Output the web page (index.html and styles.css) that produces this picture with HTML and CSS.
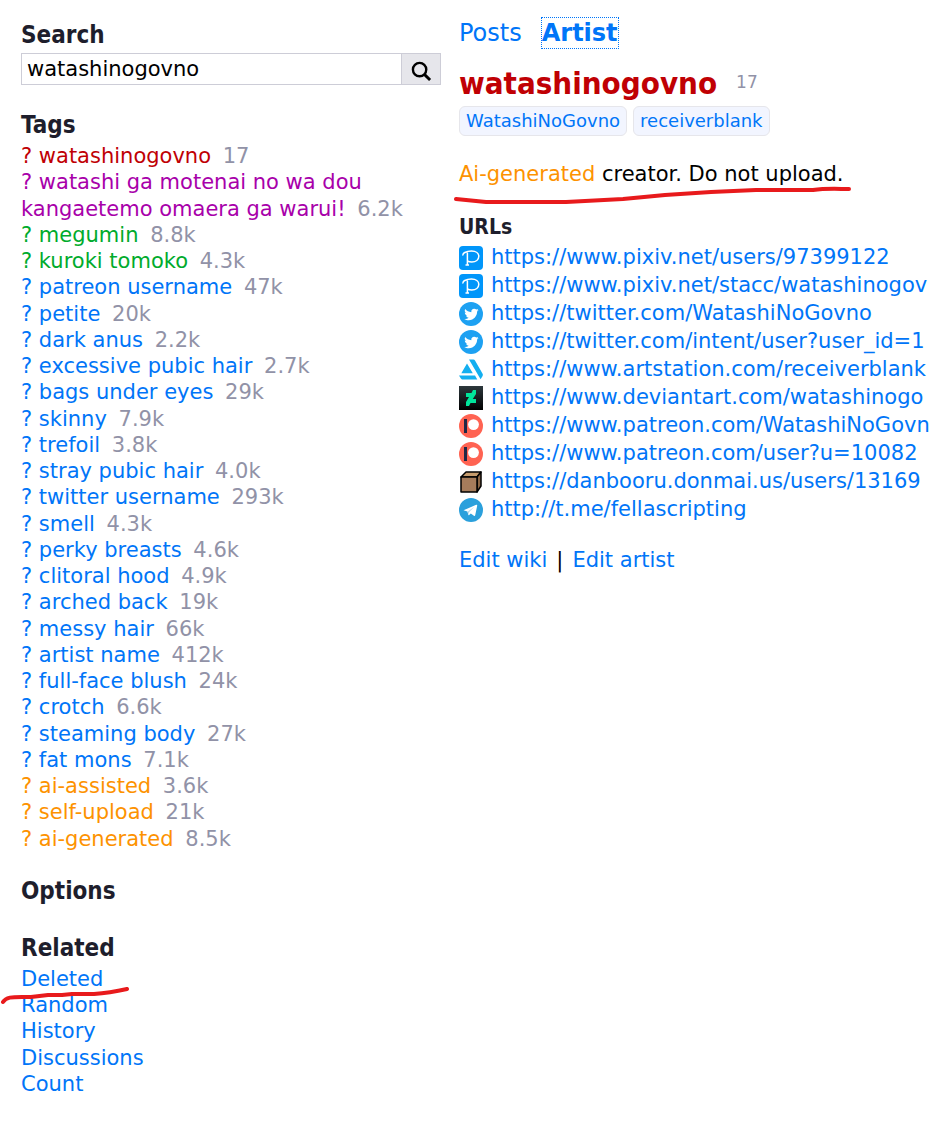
FILE: index.html
```html
<!DOCTYPE html>
<html lang="en">
<head>
    <meta charset="UTF-8">
    <meta name="viewport" content="width=device-width, initial-scale=1.0">
    <title>watashinogovno</title>
    <link rel="stylesheet" href="styles.css">
</head>
<body>
    <!-- shared icons -->
    <svg class="sprite" aria-hidden="true">
        <symbol id="pixiv" viewBox="0 0 24 24">
            <rect width="24" height="24" rx="4" fill="#0096fa"/>
            <path d="M4.200 9.500C3 7.500 7 5 12.500 5C17 5 19.800 7.200 19.800 10.300C19.800 13.700 16.800 16 12.800 16C11 16 9.600 15.600 8.400 15M8.400 6.500V18.500M6.500 19H10" fill="none" stroke="#fff" stroke-width="1.500"/>
        </symbol>
        <symbol id="twitter" viewBox="0 0 24 24">
            <circle cx="12" cy="12" r="12" fill="#1da1f2"/>
            <path d="M9.700 18.200c5.400 0 8.400-4.500 8.400-8.400v-.4c.6-.4 1.100-.9 1.500-1.500-.5.200-1.100.4-1.700.5.600-.4 1.100-.9 1.300-1.600-.6.300-1.200.6-1.900.7a3 3 0 0 0-5 2.700c-2.500-.1-4.600-1.300-6.100-3.100a3 3 0 0 0 .9 3.900c-.5 0-.9-.1-1.300-.4 0 1.400 1 2.700 2.400 3-.4.100-.9.100-1.300 0 .4 1.200 1.500 2 2.800 2.100a6 6 0 0 1-4.400 1.200c1.300.8 2.800 1.300 4.400 1.300" fill="#fff"/>
        </symbol>
        <symbol id="patreon" viewBox="0 0 24 24">
            <circle cx="12" cy="12" r="12" fill="#ff6352"/>
            <circle cx="14.500" cy="10.600" r="5.400" fill="#fff"/>
            <rect x="5" y="5" width="3" height="14" fill="#1f2846"/>
        </symbol>
    </svg>

    <div class="page">
        <aside class="sidebar">
            <section>
                <h2><label for="tags">Search</label></h2>
                <form class="search">
                    <input type="text" id="tags" value="watashinogovno">
                    <button type="button" aria-label="Search">
                        <svg width="21" height="21" viewBox="0 0 22 22"><circle cx="9" cy="9" r="7" fill="none" stroke="#000" stroke-width="2.500"/><path d="M14 14l6 6" stroke="#000" stroke-width="3"/></svg>
                    </button>
                </form>
            </section>

            <section>
                <h2>Tags</h2>
                <ul class="tags">
                    <li class="artist"><a href="#">?</a> <a href="#">watashinogovno</a> <span class="count">17</span></li>
                    <li class="copyright"><a href="#">?</a> <a href="#">watashi ga motenai no wa dou kangaetemo omaera ga warui!</a> <span class="count">6.2k</span></li>
                    <li class="character"><a href="#">?</a> <a href="#">megumin</a> <span class="count">8.8k</span></li>
                    <li class="character"><a href="#">?</a> <a href="#">kuroki tomoko</a> <span class="count">4.3k</span></li>
                    <li><a href="#">?</a> <a href="#">patreon username</a> <span class="count">47k</span></li>
                    <li><a href="#">?</a> <a href="#">petite</a> <span class="count">20k</span></li>
                    <li><a href="#">?</a> <a href="#">dark anus</a> <span class="count">2.2k</span></li>
                    <li><a href="#">?</a> <a href="#">excessive pubic hair</a> <span class="count">2.7k</span></li>
                    <li><a href="#">?</a> <a href="#">bags under eyes</a> <span class="count">29k</span></li>
                    <li><a href="#">?</a> <a href="#">skinny</a> <span class="count">7.9k</span></li>
                    <li><a href="#">?</a> <a href="#">trefoil</a> <span class="count">3.8k</span></li>
                    <li><a href="#">?</a> <a href="#">stray pubic hair</a> <span class="count">4.0k</span></li>
                    <li><a href="#">?</a> <a href="#">twitter username</a> <span class="count">293k</span></li>
                    <li><a href="#">?</a> <a href="#">smell</a> <span class="count">4.3k</span></li>
                    <li><a href="#">?</a> <a href="#">perky breasts</a> <span class="count">4.6k</span></li>
                    <li><a href="#">?</a> <a href="#">clitoral hood</a> <span class="count">4.9k</span></li>
                    <li><a href="#">?</a> <a href="#">arched back</a> <span class="count">19k</span></li>
                    <li><a href="#">?</a> <a href="#">messy hair</a> <span class="count">66k</span></li>
                    <li><a href="#">?</a> <a href="#">artist name</a> <span class="count">412k</span></li>
                    <li><a href="#">?</a> <a href="#">full-face blush</a> <span class="count">24k</span></li>
                    <li><a href="#">?</a> <a href="#">crotch</a> <span class="count">6.6k</span></li>
                    <li><a href="#">?</a> <a href="#">steaming body</a> <span class="count">27k</span></li>
                    <li><a href="#">?</a> <a href="#">fat mons</a> <span class="count">7.1k</span></li>
                    <li class="meta"><a href="#">?</a> <a href="#">ai-assisted</a> <span class="count">3.6k</span></li>
                    <li class="meta"><a href="#">?</a> <a href="#">self-upload</a> <span class="count">21k</span></li>
                    <li class="meta"><a href="#">?</a> <a href="#">ai-generated</a> <span class="count">8.5k</span></li>
                </ul>
            </section>

            <section>
                <h2>Options</h2>
            </section>

            <section>
                <h2>Related</h2>
                <ul>
                    <li class="marked">
                        <a href="#">Deleted</a>
                        <svg class="mark mark-deleted" width="130" height="18" viewBox="0 0 130 18"><path d="M3 15C6 10 12 10 22 10H31L48 8H62L72 7H94C108 6 118 4 127 2"/></svg>
                    </li>
                    <li><a href="#">Random</a></li>
                    <li><a href="#">History</a></li>
                    <li><a href="#">Discussions</a></li>
                    <li><a href="#">Count</a></li>
                </ul>
            </section>
        </aside>

        <main class="content">
            <nav class="tabs">
                <a href="#">Posts</a>
                <a href="#" class="active">Artist</a>
            </nav>

            <div class="title">
                <h1><a href="#">watashinogovno</a></h1>
                <span class="count">17</span>
            </div>
            <div class="names">
                <a href="#">WatashiNoGovno</a>
                <a href="#">receiverblank</a>
            </div>

            <p class="wiki marked">
                <a href="#" class="meta-link">Ai-generated</a> creator. Do not upload.
                <svg class="mark mark-wiki" width="400" height="20" viewBox="0 0 400 20"><path d="M3 14L33 17H113L170 14L212 10L258 7L303 5H360C374 3 386 4 396 4"/></svg>
            </p>

            <h3>URLs</h3>
            <ul class="urls">
                <li><svg><use href="#pixiv"/></svg><a href="#">https://www.pixiv.net/users/97399122</a></li>
                <li><svg><use href="#pixiv"/></svg><a href="#">https://www.pixiv.net/stacc/watashinogov</a></li>
                <li><svg><use href="#twitter"/></svg><a href="#">https://twitter.com/WatashiNoGovno</a></li>
                <li><svg><use href="#twitter"/></svg><a href="#">https://twitter.com/intent/user?user_id=1</a></li>
                <li>
                    <svg viewBox="0 0 24 24"><path d="M0 17.500h16l2.300 4H4.100c-1.300 0-1.800-.5-2.400-1.300zM8 5.500l5.800 9.700H2.300zM10 1.500h4.300c.8 0 1.300.4 1.700 1l7.600 13.200c.4.700.4 1.500 0 2.200l-2 3.300z" fill="#13aff0"/></svg>
                    <a href="#">https://www.artstation.com/receiverblank</a>
                </li>
                <li>
                    <svg viewBox="0 0 24 24">
                        <defs><linearGradient id="dark" x2="0" y2="1"><stop stop-color="#2d383d"/><stop offset="1" stop-color="#000"/></linearGradient></defs>
                        <path d="M0 0h24v24H0z" fill="url(#dark)"/>
                        <path d="M17 4v4l-3.200 5H17v4h-5.500L10 20H7v-4l3-5H7V7h5.500L14 4z" fill="#00e59b"/>
                    </svg>
                    <a href="#">https://www.deviantart.com/watashinogo</a>
                </li>
                <li><svg><use href="#patreon"/></svg><a href="#">https://www.patreon.com/WatashiNoGovn</a></li>
                <li><svg><use href="#patreon"/></svg><a href="#">https://www.patreon.com/user?u=10082</a></li>
                <li>
                    <svg viewBox="0 0 24 24" stroke="#000" stroke-width="1.500" stroke-linejoin="round">
                        <path d="M2 7l5-5h15l-4 5z" fill="#c69c6d"/>
                        <path d="M18 7l4-5v14l-4 6z" fill="#8c6746"/>
                        <path d="M2 7h16v15H2z" fill="#a67c5b"/>
                    </svg>
                    <a href="#">https://danbooru.donmai.us/users/13169</a>
                </li>
                <li>
                    <svg viewBox="0 0 24 24">
                        <circle cx="12" cy="12" r="12" fill="#2ba0dc"/>
                        <path d="M4.500 12.300L17.200 6.800c.7-.2 1.100.1 1 .9l-2 9.500c-.2.700-.7.900-1.300.5l-3.100-2.300-1.600 1.600c-.4.400-.8.300-.9-.2l-.9-3.400-3.900-1.100z" fill="#fff"/>
                        <path d="M9.300 16.500l-.6-3.100 6.500-4.500-4.900 5.200z" fill="#b9d9ec"/>
                    </svg>
                    <a href="#">http://t.me/fellascripting</a>
                </li>
            </ul>

            <p class="edit"><a href="#">Edit wiki</a><span>|</span><a href="#">Edit artist</a></p>
        </main>
    </div>
</body>
</html>
```
FILE: styles.css
```css
* {
    margin: 0;
    padding: 0;
    box-sizing: border-box;
}

body {
    font-family: "DejaVu Sans", Verdana, sans-serif;
    font-size: 21px;
    line-height: 1.25;
    color: #000;
    background: #fff;
}

a {
    color: #0075f8;
    text-decoration: none;
}

ul {
    list-style: none;
}

h1, h2, h3 {
    font-family: "DejaVu Sans Condensed", Tahoma, sans-serif;
    font-weight: bold;
    color: #1e1e2c;
}

h2 {
    font-size: 24px;
    margin-bottom: 3px;
}

h3 {
    font-size: 21px;
    margin-bottom: 3px;
}

.sprite {
    display: none;
}

.page {
    display: grid;
    grid-template-columns: 420px minmax(0, 1fr);
    gap: 18px;
    padding-left: 21px;
}

/* sidebar */
.sidebar {
    display: flex;
    flex-direction: column;
    gap: 24px;
    padding: 20px 0;
}

.search {
    display: flex;
    height: 32px;
    margin-bottom: 1px;
    border: 1px solid #cdcdd7;
}

.search input {
    flex: 1;
    min-width: 0;
    padding: 1px 5px 0;
    border: none;
    outline: none;
    font: inherit;
}

.search button {
    display: flex;
    justify-content: center;
    align-items: center;
    width: 39px;
    padding-top: 4px;
    border: none;
    border-left: 1px solid #cdcdd7;
    background: #e6e6eb;
    cursor: pointer;
}

.count {
    margin-left: 5px;
    color: #9192a7;
}

.artist a, h1 a {
    color: #c00004;
}

.copyright a {
    color: #a800aa;
}

.character a {
    color: #00ab2c;
}

.meta a, .meta-link {
    color: #fd9200;
}

/* content */
.content {
    padding-top: 18px;
}

.tabs {
    display: flex;
    gap: 20px;
    margin-bottom: 15px;
    font-size: 24px;
}

.tabs .active {
    font-weight: bold;
    outline: 1px dotted #0075f8;
}

.title {
    display: flex;
    align-items: center;
    gap: 14px;
    margin-bottom: 3px;
}

h1 {
    font-size: 31px;
    line-height: 40px;
}

.title .count {
    font-size: 17px;
}

.names {
    display: flex;
    gap: 6px;
    margin-bottom: 25px;
    font-size: 18px;
    line-height: 28px;
}

.names a {
    padding: 0 6px;
    border: 1px solid #e6e6eb;
    border-radius: 6px;
    background: #f2f5ff;
}

.wiki {
    margin-bottom: 27px;
}

.urls {
    margin-bottom: 23px;
    overflow: hidden;
}

.urls li {
    display: flex;
    gap: 8px;
    height: 28px;
    white-space: nowrap;
}

.urls svg {
    flex: none;
    align-self: center;
    width: 24px;
    height: 24px;
}

.edit {
    display: flex;
    gap: 9px;
}

/* red pen strokes over the text */
.marked {
    position: relative;
}

.mark {
    position: absolute;
    fill: none;
    stroke: #e81a1c;
    stroke-width: 4;
    stroke-linecap: round;
    stroke-linejoin: round;
    pointer-events: none;
}

.mark-deleted {
    left: -21px;
    top: 21px;
}

.mark-wiki {
    left: -6px;
    top: 24px;
}
```
